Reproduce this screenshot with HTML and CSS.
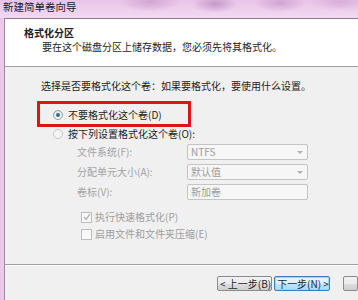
FILE: index.html
```html
<!DOCTYPE html>
<html>
	<head>
		<meta charset="UTF-8">
		<title>新建简单卷向导</title>
		<link rel="stylesheet" href="styles.css">
	</head>
	<body>
		<div class="titlebar">新建简单卷向导</div>
		<div class="frame">
			<div class="client">
				<div class="header">
					<div class="h-title">格式化分区</div>
					<div class="h-sub">要在这个磁盘分区上储存数据，您必须先将其格式化。</div>
				</div>
				<div class="body">
					<div class="prompt">选择是否要格式化这个卷：如果要格式化，要使用什么设置。</div>
					<div class="opt opt-first">
						<span class="radio checked"></span>不要格式化这个卷(D)
						<div class="mark"></div>
					</div>
					<div class="opt opt-second"><span class="radio"></span>按下列设置格式化这个卷(O):</div>
					<div class="fields">
						<span class="lbl">文件系统(F):</span>
						<span class="box">NTFS<i class="arrow"></i></span>
						<span class="lbl">分配单元大小(A):</span>
						<span class="box">默认值<i class="arrow"></i></span>
						<span class="lbl">卷标(V):</span>
						<span class="box">新加卷</span>
					</div>
					<div class="check check-first"><span class="cb">
						<svg width="8" height="8" viewBox="0 0 8 8"><path d="M1 4 L3 6.5 L7 1" fill="none" stroke="#a8a8a8" stroke-width="1.2"/></svg>
					</span>执行快速格式化(P)</div>
					<div class="check"><span class="cb"></span>启用文件和文件夹压缩(E)</div>
				</div>
				<div class="footer">
					<span class="btn">&lt; 上一步(B)</span>
					<span class="btn btn-default">下一步(N) &gt;</span>
					<span class="btn btn-cut"></span>
				</div>
			</div>
		</div>
	</body>
</html>
```

FILE: styles.css
```css
body {
	margin: 0;
	padding: 0;
	font-family: "Noto Sans CJK SC", "Liberation Sans", sans-serif;
	font-size: 10px;
	color: #1e1e1e;
	overflow: hidden;
	background: #ecc9ec;
}

.titlebar {
	height: 18px;
	line-height: 14px;
	padding-left: 3px;
	font-size: 10.5px;
	color: #221a28;
	background:
		radial-gradient(ellipse 30px 10px at 150px 2px, rgba(190, 140, 190, 0.55), transparent),
		radial-gradient(ellipse 22px 9px at 215px 4px, rgba(170, 120, 175, 0.6), transparent),
		radial-gradient(ellipse 26px 9px at 280px 3px, rgba(180, 130, 185, 0.5), transparent),
		radial-gradient(ellipse 30px 9px at 340px 2px, rgba(200, 150, 200, 0.5), transparent),
		linear-gradient(#e8c4e8, #f3d9f2);
}

.frame {
	padding-left: 4px;
	background: #ecc9ec;
}

.client {
	border-left: 1px solid #9c8a9c;
	border-top: 1px solid #8e7a90;
	background: #f0f0f0;
	height: 281px;
}

.header {
	height: 47px;
	background: #fff;
	border-bottom: 1px solid #a0a0a0;
}

.h-title {
	padding: 7px 0 0 19px;
	line-height: 14px;
	font-weight: bold;
}

.h-sub {
	padding-left: 37px;
	line-height: 14px;
}

.body {
	padding: 12px 0 0 36px;
	height: 185px;
}

.prompt {
	line-height: 14px;
}

.opt {
	display: flex;
	align-items: center;
	line-height: 12px;
	margin-left: 12px;
	position: relative;
}

.opt-first {
	margin-top: 16px;
}

.opt-second {
	margin-top: 7px;
}

.radio {
	width: 8px;
	height: 8px;
	border: 1px solid #9a9a9a;
	border-radius: 50%;
	background: linear-gradient(#e4e4e4, #fafafa);
	margin-right: 5px;
	box-sizing: content-box;
	position: relative;
}

.radio.checked::after {
	content: "";
	position: absolute;
	left: 2px;
	top: 2px;
	width: 4px;
	height: 4px;
	border-radius: 50%;
	background: #2d6a9e;
}

.opt-second .radio {
	border-color: #c8c8c8;
	background: #f4f4f4;
}

.mark {
	position: absolute;
	left: -16px;
	top: -8px;
	width: 148px;
	height: 20px;
	border: 3px solid #e0131b;
}

.fields {
	display: grid;
	grid-template-columns: 110px 121px;
	row-gap: 4px;
	margin: 4px 0 0 36px;
	align-items: center;
}

.lbl {
	color: #a3a3a3;
	line-height: 12px;
}

.box {
	height: 14px;
	line-height: 14px;
	border: 1px solid #c4c4c4;
	border-radius: 2px;
	background: #f6f6f6;
	color: #9c9c9c;
	padding-left: 3px;
	position: relative;
}

.arrow {
	position: absolute;
	right: 4px;
	top: 6px;
	border: 3px solid transparent;
	border-top: 3px solid #b0b0b0;
	border-bottom: 0;
}

.check {
	display: flex;
	align-items: center;
	margin-left: 40px;
	line-height: 12px;
	margin-top: 5px;
	color: #9e9e9e;
}

.check-first {
	margin-top: 11px;
}

.cb {
	width: 9px;
	height: 9px;
	border: 1px solid #bdbdbd;
	background: #f8f8f8;
	margin-right: 3px;
	display: flex;
	align-items: center;
	justify-content: center;
}

.footer {
	border-top: 1px solid #a0a0a0;
	box-shadow: inset 0 1px 0 #fff;
	display: flex;
	gap: 2px;
	padding: 11px 0 0 212px;
	height: 20px;
}

.btn {
	width: 58px;
	height: 13px;
	line-height: 13px;
	border: 1px solid #8a8a8a;
	border-radius: 2px;
	background: linear-gradient(#f2f2f2, #ebebeb 50%, #dddddd 51%, #cfcfcf);
	padding-left: 2px;
	white-space: nowrap;
}

.btn-default {
	border-color: #3c7fb1;
	box-shadow: inset 0 0 0 1px #9fd5f5;
	background: linear-gradient(#eaf6fd, #d9f0fc 50%, #bee6fd 51%, #a7d9f5);
}

.btn-cut {
	margin-left: 11px;
}
```
